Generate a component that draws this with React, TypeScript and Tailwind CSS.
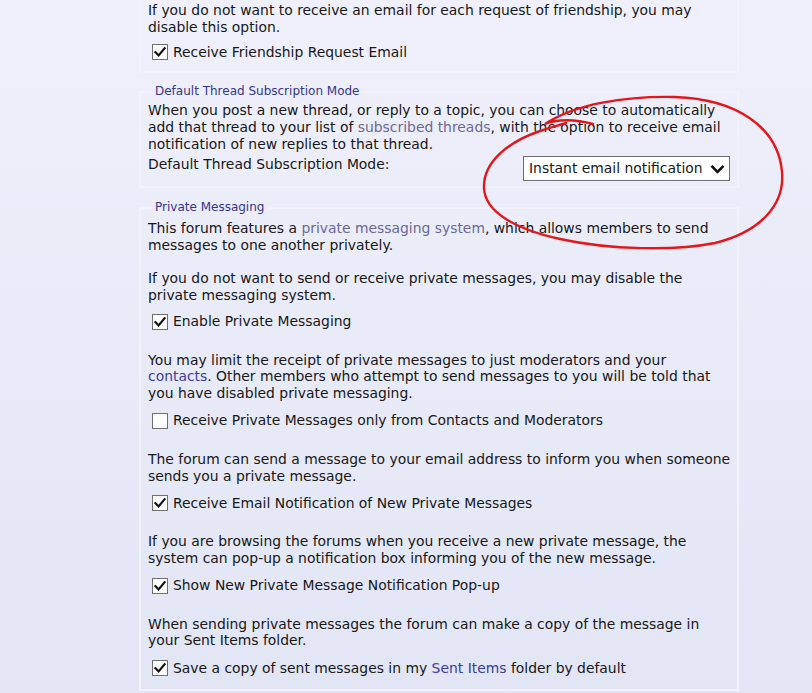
import type { ReactElement, ReactNode } from "react";

// Check box in the old Windows style
function Box({ checked }: { checked: boolean }): ReactElement {
  return (
    <span className="flex h-[16px] w-[16px] shrink-0 items-center justify-center border border-[#707070] bg-white">
      {checked && (
        <svg width="12" height="12" viewBox="0 0 12 12">
          <path d="M1.5 6.2 L4.6 9.4 L10.6 2.2" fill="none" stroke="#111" strokeWidth="2.2" strokeLinecap="square" />
        </svg>
      )}
    </span>
  );
}

function Check({ checked, children, top = "mt-[8px]" }: { checked: boolean; children: ReactNode; top?: string }): ReactElement {
  return (
    <div className={`${top} flex h-[22px] items-center gap-[5px] pl-[4px]`}>
      <Box checked={checked} />
      <span>{children}</span>
    </div>
  );
}

function Legend({ children }: { children: ReactNode }): ReactElement {
  return <legend className="ml-[3px] px-[4px] text-[12px] text-[#35358c]">{children}</legend>;
}

const link = "text-[#6c6894]";
const link2 = "text-[#3c3c9a]";

export default function App(): ReactElement {
  return (
    <div
      className="relative h-[693px] w-[812px] overflow-hidden whitespace-nowrap bg-gradient-to-b from-[#eff0fb] to-[#e2e5f4] text-[13.9px] leading-[16.7px] text-[#171717]"
      style={{ fontFamily: '"DejaVu Sans", Verdana, sans-serif' }}
    >
      <div className="ml-[139px] w-[600px]">
        {/* Friendship block, cut off at the top */}
        <div className="border-x-2 border-b-2 border-[#f1f2fa] px-[7px] pb-[8px] pt-[2px]">
          <p>
            If you do not want to receive an email for each request of friendship, you may
            <br />
            disable this option.
          </p>
          <Check checked top="mt-[6px]">Receive Friendship Request Email</Check>
        </div>

        {/* Thread subscription */}
        <fieldset className="mt-[10px] border-2 border-[#f1f2fa] px-[7px] pb-[5px]">
          <Legend>Default Thread Subscription Mode</Legend>
          <p className="mt-[2px]">
            When you post a new thread, or reply to a topic, you can choose to automatically
            <br />
            add that thread to your list of <span className={link}>subscribed threads</span>, with the option to receive email
            <br />
            notification of new replies to that thread.
          </p>
          <div className="flex items-start justify-between">
            <span className="mt-[4px]">Default Thread Subscription Mode:</span>
            <div className="mt-[4px] flex h-[25px] w-[207px] items-center justify-between border border-[#6f6f6f] bg-white pl-[5px] pr-[4px]">
              <span>Instant email notification</span>
              <svg width="15" height="10" viewBox="0 0 15 10">
                <path d="M1.5 1.8 L7.5 7.8 L13.5 1.8" fill="none" stroke="#111" strokeWidth="2.6" />
              </svg>
            </div>
          </div>
        </fieldset>

        {/* Private messaging */}
        <fieldset className="mt-[11px] border-2 border-[#f1f2fa] px-[7px] pb-[10px]">
          <Legend>Private Messaging</Legend>
          <p className="mt-[4px]">
            This forum features a <span className={link}>private messaging system</span>, which allows members to send
            <br />
            messages to one another privately.
          </p>
          <p className="mt-[17px]">
            If you do not want to send or receive private messages, you may disable the
            <br />
            private messaging system.
          </p>
          <Check checked top="mt-[7px]">Enable Private Messaging</Check>
          <p className="mt-[19px]">
            You may limit the receipt of private messages to just moderators and your
            <br />
            <span className={link2}>contacts</span>. Other members who attempt to send messages to you will be told that
            <br />
            you have disabled private messaging.
          </p>
          <Check checked={false}>Receive Private Messages only from Contacts and Moderators</Check>
          <p className="mt-[19px]">
            The forum can send a message to your email address to inform you when someone
            <br />
            sends you a private message.
          </p>
          <Check checked>Receive Email Notification of New Private Messages</Check>
          <p className="mt-[19px]">
            If you are browsing the forums when you receive a new private message, the
            <br />
            system can pop-up a notification box informing you of the new message.
          </p>
          <Check checked>Show New Private Message Notification Pop-up</Check>
          <p className="mt-[19px]">
            When sending private messages the forum can make a copy of the message in
            <br />
            your Sent Items folder.
          </p>
          <Check checked>
            Save a copy of sent messages in my <span className={link2}>Sent Items</span> folder by default
          </Check>
        </fieldset>
      </div>

      {/* Red hand-drawn annotation */}
      <svg className="pointer-events-none absolute left-0 top-0" width="812" height="693" viewBox="0 0 812 693">
        <path
          d="M593 124 C575 119 556 119 545 124 C575 104 625 96 675 97 C735 99 778 126 782 172 C785 205 760 232 715 243 C675 251 610 250 560 239 C515 229 485 212 484 188 C483 162 508 142 540 131 C552 127 560 125 566 123"
          fill="none"
          stroke="#e3161c"
          strokeWidth="2.4"
          strokeLinecap="round"
        />
      </svg>
    </div>
  );
}
